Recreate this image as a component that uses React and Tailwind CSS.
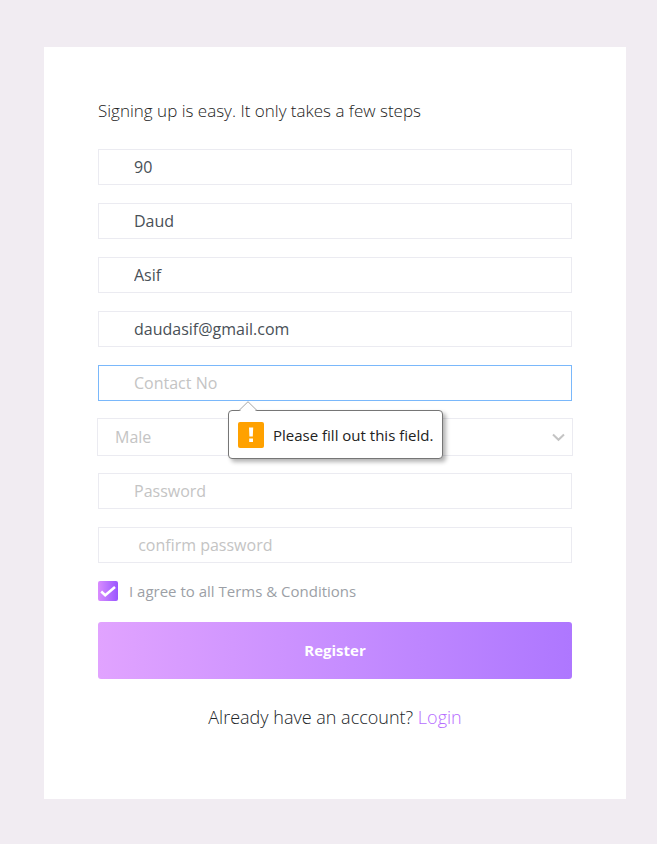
import { useState } from "react";

const base =
  "block w-full border bg-white text-[16px] leading-[20px] text-[#495057] placeholder:text-[#c4c4c4] placeholder:opacity-100 outline-none";
const field = base + " h-9 border-[#ebebf1] pl-[35px] pr-4";
const activeField = base + " h-9 border-[#7ab8fb] pl-[35px] pr-4";

function ValidationTip({ children }) {
  return (
    <div
      role="alert"
      className="absolute left-[130px] top-[45px] z-10 flex h-[49px] w-[215px] items-center gap-[9px] rounded-[4px] border border-[#767676] bg-white pl-[9px] shadow-[3px_3px_4px_rgba(0,0,0,0.3)]"
    >
      <svg className="absolute left-[9px] top-[-10px]" width="20" height="11" viewBox="0 0 20 11" aria-hidden="true">
        <path d="M1 11 L10 1 L19 11 Z" fill="#fff" />
        <path d="M1 9.5 L10 0.7 L19 9.5" fill="none" stroke="#a6a6a6" />
      </svg>
      <svg className="shrink-0" width="26" height="26" viewBox="0 0 26 26" aria-hidden="true">
        <rect width="26" height="26" rx="2" fill="#ffa100" />
        <path d="M11 5.5h4.2l-0.4 9h-3.4zM11.2 16.5h3.8v3.6h-3.8z" fill="#fff" />
      </svg>
      <span className="whitespace-nowrap text-[15px] leading-[20px] text-[#222]">{children}</span>
    </div>
  );
}

export default function App() {
  const [agreed, setAgreed] = useState(true);
  return (
    <main className="min-h-screen bg-[#f1ecf2] pt-[47px] pr-[31px] pb-[45px] pl-11 font-['Open_Sans','Noto_Sans',sans-serif]">
      <form noValidate onSubmit={(e) => e.preventDefault()} className="bg-white px-[54px] pt-[54px] pb-[70px]">
        <p className="mb-7 whitespace-nowrap text-[17px] leading-[20px] font-light text-[#222]">
          Signing up is easy. It only takes a few steps
        </p>
        <div className="flex flex-col gap-[18px]">
          <input className={field} aria-label="ID" defaultValue="90" />
          <input className={field} aria-label="First name" defaultValue="Daud" />
          <input className={field} aria-label="Last name" defaultValue="Asif" />
          <input className={field} type="email" aria-label="Email" defaultValue="daudasif@gmail.com" />
          <div className="relative">
            <input className={activeField} type="tel" aria-label="Contact No" placeholder="Contact No" required />
            <ValidationTip>Please fill out this field.</ValidationTip>
          </div>
          <div className="relative -m-px">
            <select
              aria-label="Gender"
              defaultValue="Male"
              className="block h-[38px] w-full appearance-none border border-[#ebebf1] bg-white pl-[17px] pr-8 text-[16px] leading-[20px] text-[#c4c4c4] outline-none"
            >
              <option>Male</option>
              <option>Female</option>
            </select>
            <svg
              className="pointer-events-none absolute right-[8px] top-[15px]"
              width="13"
              height="9"
              viewBox="0 0 13 9"
              fill="none"
              stroke="#c4c4c4"
              strokeWidth="2"
              aria-hidden="true"
            >
              <path d="M1 1.5 L6.5 6.8 L12 1.5" />
            </svg>
          </div>
          <input className={field} type="password" aria-label="Password" placeholder="Password" />
          <input className={field} type="password" aria-label="Confirm password" placeholder=" confirm password" />
        </div>
        <label className="mt-[18px] mb-[21px] flex h-5 items-center gap-[11px]">
          <span className="relative h-5 w-5 shrink-0">
            <input
              type="checkbox"
              checked={agreed}
              onChange={(e) => setAgreed(e.target.checked)}
              className="block h-5 w-5 appearance-none rounded-[2px] border border-[#c4c4c4] checked:border-0 checked:bg-linear-to-r checked:from-[#da8cff] checked:to-[#9a55ff]"
            />
            {agreed && (
              <svg
                className="pointer-events-none absolute inset-0"
                width="20"
                height="20"
                viewBox="0 0 20 20"
                fill="none"
                stroke="#fff"
                strokeWidth="2.6"
                aria-hidden="true"
              >
                <path d="M3.2 10.5 L7.2 14.2 L17 6" />
              </svg>
            )}
          </span>
          <span className="whitespace-nowrap text-[15px] leading-[20px] text-[#9c9fa6]">
            I agree to all Terms &amp; Conditions
          </span>
        </label>
        <button
          type="submit"
          className="block h-[57px] w-full rounded-[3px] bg-linear-to-r from-[#e1a3ff] to-[#ae77ff] text-[15px] font-bold text-white"
        >
          Register
        </button>
        <p className="mt-[26px] text-center text-[18px] leading-[24px] font-light text-[#212529]">
          Already have an account?{" "}
          <a href="#login" className="text-[#b66dff]">
            Login
          </a>
        </p>
      </form>
    </main>
  );
}
